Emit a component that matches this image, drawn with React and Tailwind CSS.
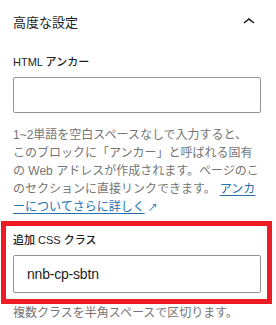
export default function App() {
  const font = 'font-["Liberation_Sans","Noto_Sans_CJK_JP",sans-serif]';

  return (
    <div className={`w-[276px] h-[325px] bg-white overflow-hidden ${font} text-[#1e1e1e]`}>
      {/* Panel header */}
      <div className="h-[44px] flex items-center justify-between pl-[13px] pr-[15px]">
        <span className="text-[13px] leading-none">高度な設定</span>
        <svg className="w-6 h-6" viewBox="0 0 24 24" fill="#1e1e1e">
          <path d="M6.5 12.4L12 8l5.5 4.4-.9 1.2L12 10l-4.6 3.6-1-1.2z" />
        </svg>
      </div>

      <div className="pl-[13px] pr-[15px]">
        {/* HTML anchor */}
        <div className="mt-[10px] h-4 flex items-center text-[11px] font-medium">HTML アンカー</div>
        <div className="mt-[7px] h-[36px] border border-[#949494] rounded-[2px]" />
        <p className="mt-[13px] text-[12px] leading-[18px] text-[#757575] whitespace-nowrap">
          1~2単語を空白スペースなしで入力すると、
          <br />
          このブロックに「アンカー」と呼ばれる固有
          <br />
          の Web アドレスが作成されます。ページのこ
          <br />
          のセクションに直接リンクできます。
          <a href="#" className="ml-[4px] text-[#2271b1] underline underline-offset-2">
            アンカ
            <br />
            ーについてさらに詳しく
          </a>
          <span className="ml-[3px] text-[10px] text-[#2271b1]">↗</span>
        </p>

        {/* Additional CSS classes */}
        <div className="relative mt-[15px]">
          <div className="h-4 flex items-center text-[11px] font-medium">追加 CSS クラス</div>
          <div className="mt-[7px] h-[38px] border border-[#949494] rounded-[2px] flex items-center px-[13px] text-[14px] tracking-[-0.2px]">
            nnb-cp-sbtn
          </div>
          <div className="absolute -top-[11px] -bottom-[11px] -left-[12px] -right-[11px] border-[5px] border-[#ed1c24] pointer-events-none" />
        </div>
        <p className="mt-[11px] text-[12px] leading-[18px] text-[#757575] whitespace-nowrap">
          複数クラスを半角スペースで区切ります。
        </p>
      </div>
    </div>
  );
}
